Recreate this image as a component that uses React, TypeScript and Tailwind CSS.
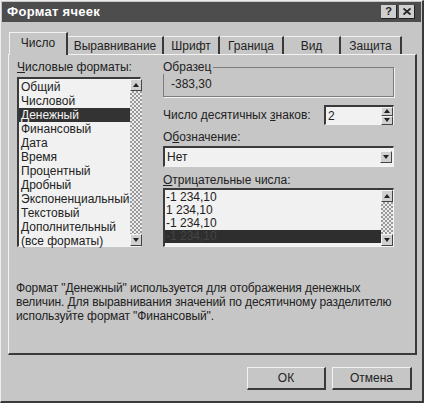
import React from "react";

const checker =
  "bg-[repeating-conic-gradient(#9a9a9a_0%_25%,#ececec_0%_50%)] bg-size-[4px_4px]";

function Arrow({ up, small }: { up?: boolean; small?: boolean }) {
  return (
    <div
      className={`w-[12px] ${small ? "h-[9px]" : "h-[12px]"} bg-[#d0d0d0] border-t border-l border-t-[#f4f4f4] border-l-[#f4f4f4] border-r border-b border-r-[#444] border-b-[#444] flex items-center justify-center`}
    >
      <svg width="6" height="4" viewBox="0 0 6 4">
        {up ? <polygon points="3,0 6,4 0,4" fill="#222" /> : <polygon points="0,0 6,0 3,4" fill="#222" />}
      </svg>
    </div>
  );
}

function ScrollBar() {
  return (
    <div className={`w-[12px] h-full flex flex-col justify-between ${checker}`}>
      <Arrow up />
      <Arrow />
    </div>
  );
}

const formats = [
  "Общий",
  "Числовой",
  "Денежный",
  "Финансовый",
  "Дата",
  "Время",
  "Процентный",
  "Дробный",
  "Экспоненциальный",
  "Текстовый",
  "Дополнительный",
  "(все форматы)",
];

const negatives = ["-1 234,10", "1 234,10", "-1 234,10", "-1 234,10"];

const tabs = [
  { label: "Выравнивание", w: "w-[96px]" },
  { label: "Шрифт", w: "w-[56px]" },
  { label: "Граница", w: "w-[64px]" },
  { label: "Вид", w: "w-[57px]" },
  { label: "Защита", w: "w-[61px]" },
];

const sunken =
  "border-t-2 border-l-2 border-t-[#3a3a3a] border-l-[#3a3a3a] border-r border-b border-r-[#f4f4f4] border-b-[#f4f4f4] bg-[#f1f1f1]";

const raised =
  "bg-[#c6c6c6] border-t border-l border-t-[#f2f2f2] border-l-[#f2f2f2] border-r-2 border-b-2 border-r-[#3a3a3a] border-b-[#3a3a3a]";

export default function App() {
  return (
    <div className="w-[425px] h-[408px] bg-white font-['Liberation_Sans',Arial,sans-serif] text-[12px] text-[#222]">
      <div className="w-[424px] h-[403px] bg-[#c6c6c6] border-t border-l border-t-[#ededed] border-l-[#ededed] border-r-2 border-b-2 border-r-[#3a3a3a] border-b-[#3a3a3a] pt-px px-px">
        {/* title bar */}
        <div className="h-[20px] bg-[#4d4d4d] flex items-center justify-between pl-[5px] pr-[6px]">
          <span className="text-white font-bold text-[13px] tracking-[0.3px]">Формат ячеек</span>
          <div className="flex gap-[2px]">
            <div className="w-[16px] h-[14px] bg-[#cfcfcf] border-r border-b border-r-[#222] border-b-[#222] flex items-center justify-center font-bold text-[11px] leading-none">?</div>
            <div className="w-[16px] h-[14px] bg-[#cfcfcf] border-r border-b border-r-[#222] border-b-[#222] flex items-center justify-center">
              <svg width="8" height="7" viewBox="0 0 8 7">
                <path d="M0.5 0.5 L7.5 6.5 M7.5 0.5 L0.5 6.5" stroke="#222" strokeWidth="1.8" />
              </svg>
            </div>
          </div>
        </div>

        {/* tabs */}
        <div className="mt-[10px] pl-[7px] flex items-end h-[22px]">
          <div className="w-[59px] h-[23px] -mb-px relative z-10 bg-[#c6c6c6] border-t border-l border-t-[#f2f2f2] border-l-[#f2f2f2] border-r-2 border-r-[#3a3a3a] flex items-center justify-center pb-[2px]">
            Число
          </div>
          {tabs.map((t) => (
            <div
              key={t.label}
              className={`${t.w} h-[18px] border-t border-t-[#f2f2f2] border-r-2 border-r-[#3a3a3a] flex items-center justify-center`}
            >
              {t.label}
            </div>
          ))}
        </div>

        {/* panel */}
        <div className="ml-[6px] w-[409px] h-[301px] border-t border-l border-t-[#f2f2f2] border-l-[#f2f2f2] border-r-2 border-b-2 border-r-[#3a3a3a] border-b-[#3a3a3a]">
          <div className="flex">
            {/* left column */}
            <div className="ml-[8px] mt-[5px] w-[124px]">
              <div className="leading-[14px] h-[14px]">
                <span className="underline">Ч</span>исловые форматы:
              </div>
              <div className={`mt-[3px] h-[170px] flex ${sunken}`}>
                <div className="flex-1 pt-px">
                  {formats.map((f) => (
                    <div
                      key={f}
                      className={`h-[14px] leading-[14px] pl-[2px] whitespace-nowrap ${
                        f === "Денежный" ? "bg-[#333] text-[#f4f4f4]" : ""
                      }`}
                    >
                      {f}
                    </div>
                  ))}
                </div>
                <ScrollBar />
              </div>
            </div>

            {/* right column */}
            <div className="ml-[22px] mt-[5px] w-[231px] flex flex-col">
              <fieldset className="border border-[#7c7c7c] shadow-[1px_1px_0_#f2f2f2] px-[6px] pb-[5px]">
                <legend className="leading-[14px] -ml-[7px] pr-[2px]">Образец</legend>
                <div className="leading-[14px] h-[14px] mt-[3px] pl-px">-383,30</div>
              </fieldset>

              <div className="mt-[8px] flex items-center justify-between h-[20px]">
                <span>
                  Число десятичных <span className="underline">з</span>наков:
                </span>
                <div className={`w-[70px] h-[20px] flex items-center ${sunken}`}>
                  <span className="flex-1 pl-[2px] leading-[14px]">2</span>
                  <div className="flex flex-col">
                    <Arrow up small />
                    <Arrow small />
                  </div>
                </div>
              </div>

              <div className="mt-[5px] leading-[14px] h-[14px]">
                О<span className="underline">б</span>означение:
              </div>
              <div className={`mt-[2px] h-[21px] flex items-center ${sunken}`}>
                <span className="flex-1 pl-[2px]">Нет</span>
                <div className="h-full flex items-center pr-px">
                  <Arrow />
                </div>
              </div>

              <div className="mt-[6px] leading-[14px] h-[14px]">
                <span className="underline">О</span>трицательные числа:
              </div>
              <div className={`mt-px h-[59px] flex ${sunken}`}>
                <div className="flex-1 pt-px">
                  {negatives.map((n, i) => (
                    <div
                      key={i}
                      className={`h-[13px] leading-[13px] pl-[1px] ${
                        i === 3 ? "bg-[#2e2e2e] text-[#444]" : ""
                      }`}
                    >
                      {n}
                    </div>
                  ))}
                </div>
                <ScrollBar />
              </div>
            </div>
          </div>

          <p className="mt-[34px] ml-[7px] w-[396px] leading-[14px] tracking-[-0.1px]">
            Формат "Денежный" используется для отображения денежных
            <br />
            величин. Для выравнивания значений по десятичному разделителю
            <br />
            используйте формат "Финансовый".
          </p>
        </div>

        {/* buttons */}
        <div className="mt-[12px] flex justify-end gap-[6px] pr-[9px]">
          <button className={`w-[79px] h-[23px] ${raised}`}>ОК</button>
          <button className={`w-[80px] h-[23px] ${raised}`}>Отмена</button>
        </div>
      </div>
    </div>
  );
}
